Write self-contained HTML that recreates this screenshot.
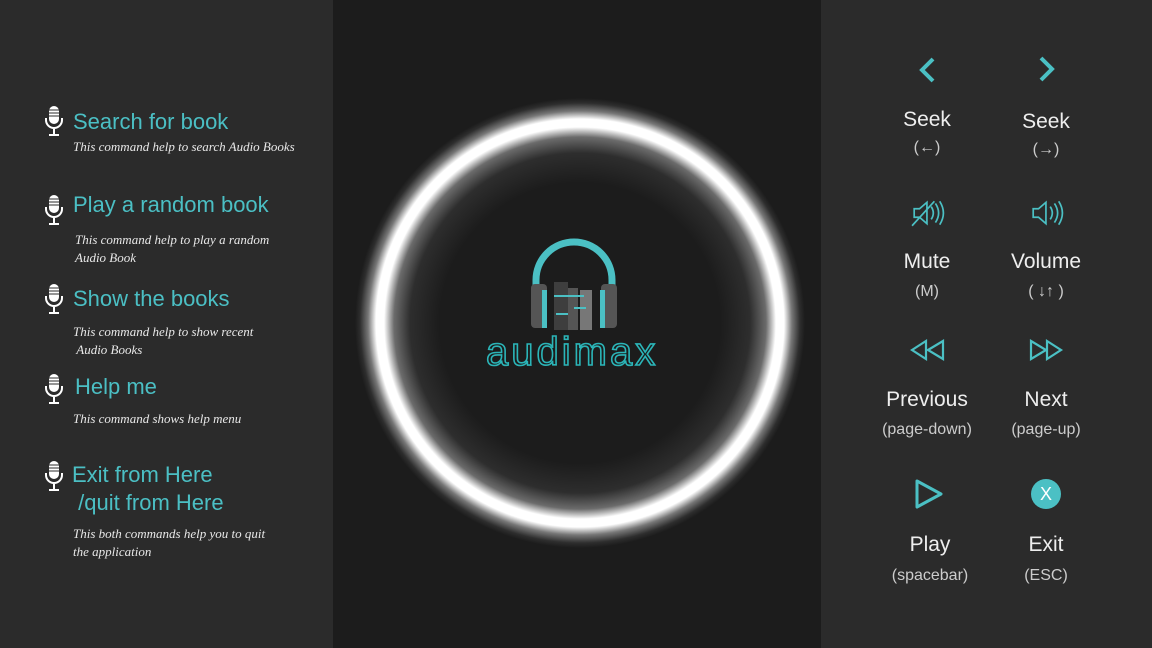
<!DOCTYPE html>
<html><head><meta charset="utf-8"><style>
*{margin:0;padding:0;box-sizing:border-box}
body{width:1152px;height:648px;overflow:hidden;background:#1c1c1c;font-family:"Liberation Sans",sans-serif;position:relative}
.lp{position:absolute;left:0;top:0;width:333px;height:648px;background:#2b2b2b}
.rp{position:absolute;left:821px;top:0;width:331px;height:648px;background:#2b2b2b}
.cmd{position:absolute;color:#4bbfc4;font-size:22px}
.desc{position:absolute;color:#e8e8e8;font-family:"Liberation Serif",serif;font-style:italic;font-size:13px;line-height:18px}
.mic{position:absolute;width:20px;height:32px}
.lab{position:absolute;color:#eee;font-size:21px;text-align:center;width:120px}
.sub{position:absolute;color:#ccc;font-size:16px;text-align:center;width:120px}
.ic{position:absolute}
</style></head><body>
<div class="lp"></div><div class="rp"></div>
<div style="position:absolute;left:355px;top:98px;width:450px;height:450px;border-radius:50%;background:radial-gradient(circle at center,rgba(0,0,0,0) 0px,rgba(255,255,255,0) 140px,rgba(255,255,255,.08) 170px,rgba(255,255,255,.35) 186px,#fff 196px,#fff 204px,rgba(255,255,255,.4) 212px,rgba(255,255,255,.08) 220px,rgba(255,255,255,0) 225px)"></div>

<svg class="mic" style="left:44px;top:105px" viewBox="0 0 20 32"><rect x="5" y="1" width="10" height="18" rx="5" fill="#fff"/><path d="M2 13v2a8 8 0 0 0 16 0v-2M10 23v6M5 30h10" stroke="#fff" stroke-width="2" fill="none"/><path d="M5 5h10M5 8h10M5 11h10" stroke="#2b2b2b"/></svg>
<div class="cmd" style="left:73px;top:109px">Search for book</div>
<div class="desc" style="left:73px;top:138px">This command help to search Audio Books</div>

<svg class="mic" style="left:44px;top:194px" viewBox="0 0 20 32"><rect x="5" y="1" width="10" height="18" rx="5" fill="#fff"/><path d="M2 13v2a8 8 0 0 0 16 0v-2M10 23v6M5 30h10" stroke="#fff" stroke-width="2" fill="none"/><path d="M5 5h10M5 8h10M5 11h10" stroke="#2b2b2b"/></svg>
<div class="cmd" style="left:73px;top:192px">Play a random book</div>
<div class="desc" style="left:75px;top:231px">This command help to play a random<br>Audio Book</div>

<svg class="mic" style="left:44px;top:283px" viewBox="0 0 20 32"><rect x="5" y="1" width="10" height="18" rx="5" fill="#fff"/><path d="M2 13v2a8 8 0 0 0 16 0v-2M10 23v6M5 30h10" stroke="#fff" stroke-width="2" fill="none"/><path d="M5 5h10M5 8h10M5 11h10" stroke="#2b2b2b"/></svg>
<div class="cmd" style="left:73px;top:286px">Show the books</div>
<div class="desc" style="left:73px;top:323px">This command help to show recent<br>&nbsp;Audio Books</div>

<svg class="mic" style="left:44px;top:373px" viewBox="0 0 20 32"><rect x="5" y="1" width="10" height="18" rx="5" fill="#fff"/><path d="M2 13v2a8 8 0 0 0 16 0v-2M10 23v6M5 30h10" stroke="#fff" stroke-width="2" fill="none"/><path d="M5 5h10M5 8h10M5 11h10" stroke="#2b2b2b"/></svg>
<div class="cmd" style="left:75px;top:374px">Help me</div>
<div class="desc" style="left:73px;top:410px">This command shows help menu</div>

<svg class="mic" style="left:44px;top:460px" viewBox="0 0 20 32"><rect x="5" y="1" width="10" height="18" rx="5" fill="#fff"/><path d="M2 13v2a8 8 0 0 0 16 0v-2M10 23v6M5 30h10" stroke="#fff" stroke-width="2" fill="none"/><path d="M5 5h10M5 8h10M5 11h10" stroke="#2b2b2b"/></svg>
<div class="cmd" style="left:72px;top:461px;line-height:28px">Exit from Here<br>&nbsp;/quit from Here</div>
<div class="desc" style="left:73px;top:525px">This both commands help you to quit<br>the application</div>

<svg class="ic" style="left:528px;top:238px" width="92" height="98" viewBox="0 0 92 98">
<path d="M8 48V42a38 38 0 0 1 76 0v6" stroke="#4bc0c4" stroke-width="7" fill="none"/>
<rect x="3" y="46" width="16" height="44" rx="4" fill="#555"/><rect x="73" y="46" width="16" height="44" rx="4" fill="#555"/>
<rect x="26" y="44" width="14" height="48" fill="#3e3e3e"/><rect x="40" y="50" width="10" height="42" fill="#555"/><rect x="52" y="52" width="12" height="40" fill="#777"/>
<rect x="14" y="52" width="5" height="38" fill="#4bc0c4"/><rect x="72" y="52" width="5" height="38" fill="#4bc0c4"/>
<path d="M26 58h30M28 76h12M46 70h12" stroke="#4bc0c4" stroke-width="2"/>
</svg>
<div style="position:absolute;left:486px;top:330px;font-size:40px;color:transparent;-webkit-text-stroke:1.6px #2bb5b8;letter-spacing:3px">audimax</div>

<svg class="ic" style="left:916px;top:56px" width="24" height="28"><path d="M17 3L6 14l11 11" stroke="#4bc0c4" stroke-width="4" fill="none"/></svg>
<svg class="ic" style="left:1034px;top:55px" width="24" height="28"><path d="M7 3l11 11L7 25" stroke="#4bc0c4" stroke-width="4" fill="none"/></svg>
<div class="lab" style="left:867px;top:108px">Seek</div><div class="sub" style="left:867px;top:139px">(←)</div>
<div class="lab" style="left:986px;top:110px">Seek</div><div class="sub" style="left:986px;top:141px">(→)</div>

<svg class="ic" style="left:911px;top:198px" width="34" height="30" viewBox="0 0 32 28"><path d="M3 10h5l7-6v20l-7-6H3z M19 8q4 6 0 12M23 5q6 9 0 18M27 3q7 11 0 22M1 26L22 3" stroke="#4bc0c4" stroke-width="1.6" fill="none"/></svg>
<svg class="ic" style="left:1030px;top:198px" width="34" height="30" viewBox="0 0 32 28"><path d="M3 10h5l7-6v20l-7-6H3z M19 8q4 6 0 12M23 5q6 9 0 18M27 3q7 11 0 22" stroke="#4bc0c4" stroke-width="1.6" fill="none"/></svg>
<div class="lab" style="left:867px;top:250px">Mute</div><div class="sub" style="left:867px;top:283px">(M)</div>
<div class="lab" style="left:986px;top:250px">Volume</div><div class="sub" style="left:986px;top:283px">( ↓↑ )</div>

<svg class="ic" style="left:910px;top:339px" width="36" height="22"><path d="M2 11L16 2v18zM18 11L33 2v18z" stroke="#4bc0c4" stroke-width="2.2" fill="none"/></svg>
<svg class="ic" style="left:1028px;top:339px" width="36" height="22"><path d="M3 2l15 9-15 9zM19 2l14 9-14 9z" stroke="#4bc0c4" stroke-width="2.2" fill="none"/></svg>
<div class="lab" style="left:867px;top:388px">Previous</div><div class="sub" style="left:867px;top:421px">(page-down)</div>
<div class="lab" style="left:986px;top:388px">Next</div><div class="sub" style="left:986px;top:421px">(page-up)</div>

<svg class="ic" style="left:913px;top:478px" width="32" height="32"><path d="M4 3l24 13L4 29z" stroke="#4bc0c4" stroke-width="3" fill="none" stroke-linejoin="round"/></svg>
<div style="position:absolute;left:1031px;top:479px;width:30px;height:30px;border-radius:50%;background:#4bc0c4;color:#fff;font-size:18px;text-align:center;line-height:30px">X</div>
<div class="lab" style="left:870px;top:533px">Play</div><div class="sub" style="left:870px;top:567px">(spacebar)</div>
<div class="lab" style="left:986px;top:533px">Exit</div><div class="sub" style="left:986px;top:567px">(ESC)</div>
</body></html>
